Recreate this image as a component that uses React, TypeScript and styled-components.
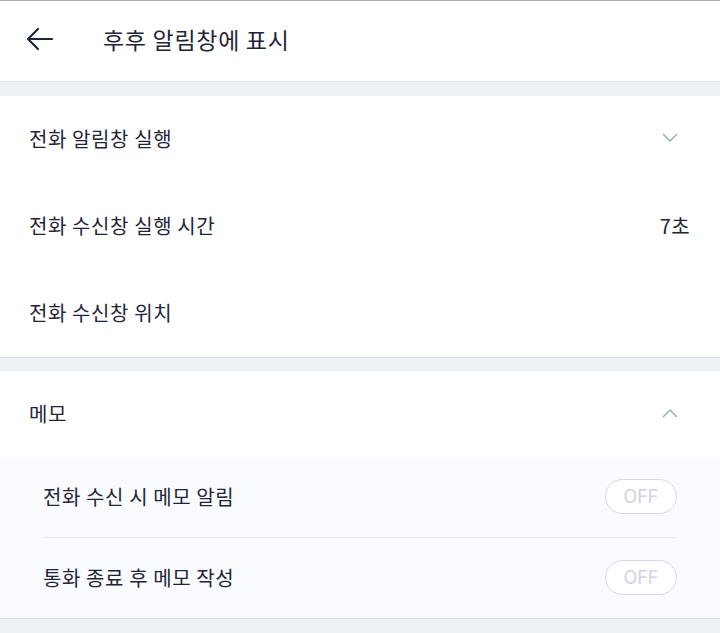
import React from 'react';
import styled, { createGlobalStyle } from 'styled-components';

const GlobalStyle = createGlobalStyle`
  html, body {
    margin: 0;
    padding: 0;
    background: #eef1f6;
    font-family: 'Noto Sans CJK KR', 'Noto Sans', sans-serif;
    color: #1f2538;
  }
  * { box-sizing: border-box; }
`;

const Page = styled.div`
  width: 720px;
  min-height: 633px;
  border-top: 1px solid #a9abb0;
  background: #eef1f6;
`;

const Header = styled.header`
  height: 81px;
  background: #ffffff;
  border-bottom: 1px solid #e1e4e9;
  display: flex;
  align-items: center;
  padding: 0 0 4px 26px;
`;

const BackButton = styled.button`
  border: none;
  background: none;
  padding: 0;
  width: 28px;
  height: 28px;
  display: flex;
  align-items: center;
  justify-content: center;
  color: #1f2538;
  cursor: pointer;
`;

const Title = styled.h1`
  margin: 0 0 0 49px;
  font-size: 23px;
  font-weight: 400;
  letter-spacing: 0.7px;
`;

const Section = styled.section<{ $gap?: number }>`
  margin-top: ${(p) => p.$gap ?? 14}px;
  background: #ffffff;
  border-bottom: 1px solid #d8dde5;
`;

const Row = styled.div<{ $h?: number }>`
  height: ${(p) => p.$h ?? 87}px;
  display: flex;
  align-items: center;
  justify-content: space-between;
  padding: 0 30px 3px 29px;
`;

const Label = styled.span`
  font-size: 20px;
  font-weight: 400;
  letter-spacing: 0.6px;
`;

const Value = styled.span`
  font-size: 20px;
  letter-spacing: 0.4px;
`;

const Chevron = styled.span`
  display: flex;
  color: #9aa5b6;
  margin-right: 12px;
`;

const SubList = styled.div`
  background: #fafbfe;
  padding: 0 43px;
`;

const SubRow = styled.div<{ $last?: boolean }>`
  height: 80px;
  display: flex;
  align-items: center;
  justify-content: space-between;
  padding-bottom: 2px;
  border-bottom: ${(p) => (p.$last ? 'none' : '1px solid #eceef3')};
`;

const Toggle = styled.span`
  width: 72px;
  height: 35px;
  border: 1.5px solid #d5dae5;
  border-radius: 18px;
  display: flex;
  align-items: center;
  justify-content: center;
  font-family: 'Inter', 'Noto Sans', sans-serif;
  font-size: 18px;
  color: #ced4df;
  background: #ffffff;
`;

const ChevronIcon = ({ up }: { up?: boolean }) => (
  <svg width="16" height="10" viewBox="0 0 16 10" fill="none">
    <path
      d={up ? 'M1.5 8.5 L8 2 L14.5 8.5' : 'M1.5 1.5 L8 8 L14.5 1.5'}
      stroke="currentColor"
      strokeWidth="1.4"
      strokeLinecap="round"
      strokeLinejoin="round"
    />
  </svg>
);

const rows = [
  { label: '전화 알림창 실행', chevron: true },
  { label: '전화 수신창 실행 시간', value: '7초' },
  { label: '전화 수신창 위치' },
];

const memoRows = ['전화 수신 시 메모 알림', '통화 종료 후 메모 작성'];

export default function App() {
  return (
    <>
      <GlobalStyle />
      <Page>
        <Header>
          <BackButton aria-label="back">
            <svg width="28" height="24" viewBox="0 0 28 24" fill="none">
              <path
                d="M26 12 H2 M12 2 L2 12 L12 22"
                stroke="currentColor"
                strokeWidth="2.2"
                strokeLinecap="round"
                strokeLinejoin="round"
              />
            </svg>
          </BackButton>
          <Title>후후 알림창에 표시</Title>
        </Header>

        <Section>
          {rows.map((r) => (
            <Row key={r.label}>
              <Label>{r.label}</Label>
              {r.chevron && (
                <Chevron>
                  <ChevronIcon />
                </Chevron>
              )}
              {r.value && <Value>{r.value}</Value>}
            </Row>
          ))}
        </Section>

        <Section $gap={13}>
          <Row $h={87}>
            <Label>메모</Label>
            <Chevron>
              <ChevronIcon up />
            </Chevron>
          </Row>
          <SubList>
            {memoRows.map((m, i) => (
              <SubRow key={m} $last={i === memoRows.length - 1}>
                <Label>{m}</Label>
                <Toggle>OFF</Toggle>
              </SubRow>
            ))}
          </SubList>
        </Section>
      </Page>
    </>
  );
}
